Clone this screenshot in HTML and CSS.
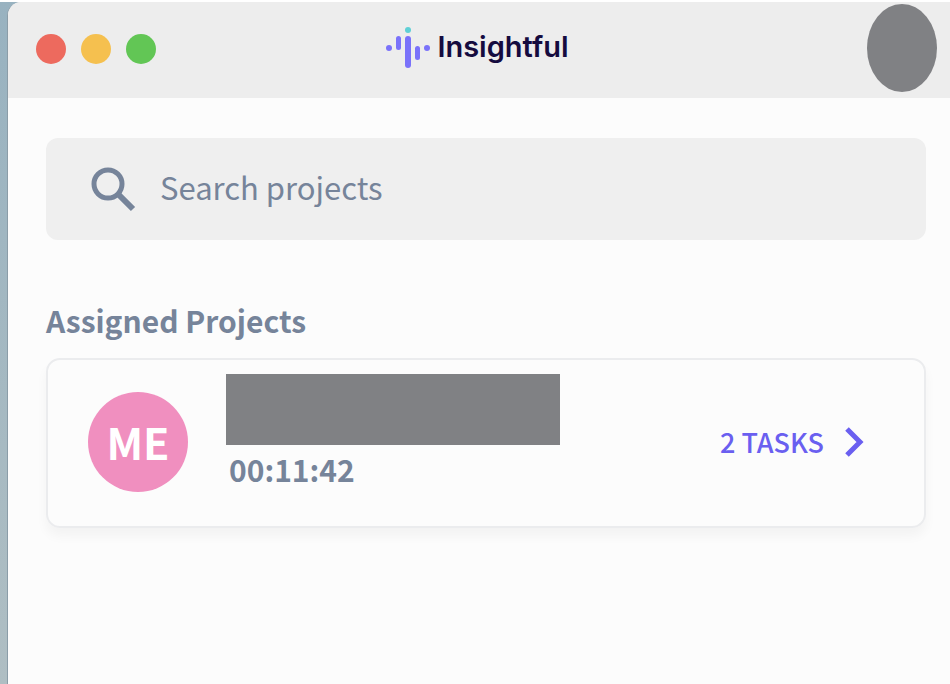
FILE: index.html
```html
<!DOCTYPE html>
<html lang="en">
<head>
    <meta charset="UTF-8">
    <meta name="viewport" content="width=device-width, initial-scale=1.0">
    <title>Insightful</title>
    <link rel="stylesheet" href="styles.css">
</head>
<body>
    <div class="window">
        <header class="titlebar">
            <div class="controls">
                <button class="dot close" aria-label="Close"></button>
                <button class="dot minimize" aria-label="Minimize"></button>
                <button class="dot maximize" aria-label="Maximize"></button>
            </div>
            <div class="logo">
                <svg class="logo-mark" viewBox="0 0 46 44" aria-hidden="true">
                    <circle cx="4" cy="23" r="3" fill="#7a72fa"/>
                    <rect x="11" y="11" width="5" height="14" rx="2.5" fill="#7a72fa"/>
                    <circle cx="23" cy="5" r="3" fill="#5fd0d6"/>
                    <rect x="20" y="11" width="6" height="32" rx="3" fill="#7a72fa"/>
                    <rect x="30" y="21" width="5" height="14" rx="2.5" fill="#7a72fa"/>
                    <circle cx="42" cy="23" r="3" fill="#7a72fa"/>
                </svg>
                <span class="logo-text">Insightful</span>
            </div>
            <div class="profile"></div>
        </header>

        <main class="content">
            <label class="search">
                <svg class="search-icon" viewBox="0 0 46 46" aria-hidden="true">
                    <circle cx="18" cy="18" r="14" fill="none" stroke="#76849a" stroke-width="5"/>
                    <path d="M28 28 L43 43" stroke="#76849a" stroke-width="6"/>
                </svg>
                <input type="text" class="search-input" placeholder="Search projects" aria-label="Search projects">
            </label>

            <h2 class="section-title">Assigned Projects</h2>

            <div class="project-card">
                <div class="avatar">ME</div>
                <div class="project-info">
                    <div class="project-name"></div>
                    <div class="project-time">00:11:42</div>
                </div>
                <a href="#" class="tasks-link">
                    2 TASKS
                    <svg class="chevron" viewBox="0 0 20 32" aria-hidden="true">
                        <path d="M3 3 L16 16 L3 29" fill="none" stroke="#6a5ff0" stroke-width="5"/>
                    </svg>
                </a>
            </div>
        </main>
    </div>
</body>
</html>
```
FILE: styles.css
```css
* {
    margin: 0;
    padding: 0;
    box-sizing: border-box;
}

body {
    min-height: 100vh;
    display: flex;
    padding-left: 7px;
    border-top: 2px solid #fff;
    background: linear-gradient(to bottom, #98b2c0, #afbec3);
    font-family: "Noto Sans CJK SC", "Noto Sans", sans-serif;
    color: #76849a;
}

.window {
    flex: 1;
    border-left: 1px solid #8b9da8;
    border-top-left-radius: 14px;
    background: #fcfcfc;
    overflow: hidden;
}

.titlebar {
    display: grid;
    grid-template-columns: 1fr auto 1fr;
    align-items: center;
    height: 96px;
    padding: 0 13px 4px;
    background: #ededed;
}

.controls {
    display: flex;
    gap: 15px;
    padding-top: 2px;
    padding-left: 15px;
}

.dot {
    width: 30px;
    height: 30px;
    border: none;
    border-radius: 50%;
    cursor: pointer;
}

.close {
    background: #ed6a5e;
}

.minimize {
    background: #f5c04f;
}

.maximize {
    background: #62c655;
}

.logo {
    display: flex;
    align-items: center;
    gap: 6px;
    padding-right: 4px;
    padding-bottom: 2px;
}

.logo-mark {
    width: 46px;
    height: 44px;
}

.logo-text {
    font-family: Inter, sans-serif;
    font-size: 29px;
    font-weight: 600;
    line-height: 40px;
    color: #150b3f;
}

.profile {
    justify-self: end;
    width: 70px;
    height: 88px;
    border-radius: 50%;
    background: #808184;
}

.content {
    padding: 40px 24px 40px 38px;
}

.search {
    display: flex;
    align-items: center;
    gap: 24px;
    height: 102px;
    padding: 0 44px;
    border-radius: 12px;
    background: #efefef;
}

.search-icon {
    width: 46px;
    height: 46px;
    flex-shrink: 0;
}

.search-input {
    flex: 1;
    min-width: 0;
    padding-bottom: 4px;
    border: none;
    outline: none;
    background: transparent;
    font-family: inherit;
    font-size: 31px;
    line-height: 48px;
    color: #76849a;
}

.search-input::placeholder {
    color: #76849a;
    opacity: 1;
}

.section-title {
    margin-top: 56px;
    margin-bottom: 14px;
    font-size: 30px;
    font-weight: 700;
    line-height: 48px;
}

.project-card {
    display: flex;
    align-items: center;
    height: 170px;
    padding: 0 60px 2px 40px;
    border: 2px solid #ebecee;
    border-radius: 14px;
    box-shadow: 0 8px 12px rgba(0, 0, 0, 0.04);
}

.avatar {
    width: 100px;
    height: 100px;
    border-radius: 50%;
    background: #f08fbf;
    color: #fff;
    font-size: 43px;
    font-weight: 700;
    line-height: 98px;
    text-align: center;
}

.project-info {
    align-self: flex-start;
    flex: 1;
    margin-left: 38px;
    padding-top: 14px;
}

.project-name {
    max-width: 334px;
    height: 71px;
    background: #808184;
}

.project-time {
    padding-left: 3px;
    font-size: 30px;
    font-weight: 700;
    line-height: 48px;
}

.tasks-link {
    display: flex;
    align-items: center;
    gap: 20px;
    font-size: 27px;
    font-weight: 500;
    line-height: 40px;
    color: #6a5ff0;
    text-decoration: none;
}

.chevron {
    width: 20px;
    height: 32px;
}
```
